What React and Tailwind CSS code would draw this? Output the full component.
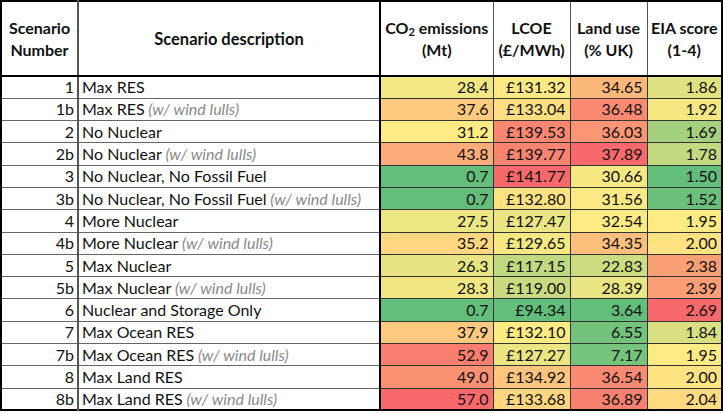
import React from 'react';

const rows = [
  ['1', 'Max RES', false, 28.4, 131.32, 34.65, 1.86],
  ['1b', 'Max RES', true, 37.6, 133.04, 36.48, 1.92],
  ['2', 'No Nuclear', false, 31.2, 139.53, 36.03, 1.69],
  ['2b', 'No Nuclear', true, 43.8, 139.77, 37.89, 1.78],
  ['3', 'No Nuclear, No Fossil Fuel', false, 0.7, 141.77, 30.66, 1.5],
  ['3b', 'No Nuclear, No Fossil Fuel', true, 0.7, 132.8, 31.56, 1.52],
  ['4', 'More Nuclear', false, 27.5, 127.47, 32.54, 1.95],
  ['4b', 'More Nuclear', true, 35.2, 129.65, 34.35, 2.0],
  ['5', 'Max Nuclear', false, 26.3, 117.15, 22.83, 2.38],
  ['5b', 'Max Nuclear', true, 28.3, 119.0, 28.39, 2.39],
  ['6', 'Nuclear and Storage Only', false, 0.7, 94.34, 3.64, 2.69],
  ['7', 'Max Ocean RES', false, 37.9, 132.1, 6.55, 1.84],
  ['7b', 'Max Ocean RES', true, 52.9, 127.27, 7.17, 1.95],
  ['8', 'Max Land RES', false, 49.0, 134.92, 36.54, 2.0],
  ['8b', 'Max Land RES', true, 57.0, 133.68, 36.89, 2.04],
];

const GREEN = [99, 190, 123];
const YELLOW = [255, 235, 132];
const RED = [248, 105, 107];

// excel style 3-colour scale, midpoint = 50th percentile
function colourScale(values) {
  const s = [...values].sort((a, b) => a - b);
  const min = s[0], max = s[s.length - 1], mid = s[Math.floor(s.length / 2)];
  return v => {
    let a, b, t;
    if (v <= mid) { a = GREEN; b = YELLOW; t = mid === min ? 1 : (v - min) / (mid - min); }
    else { a = YELLOW; b = RED; t = (v - mid) / (max - mid); }
    const c = a.map((x, i) => Math.round(x + (b[i] - x) * t));
    return `rgb(${c[0]},${c[1]},${c[2]})`;
  };
}

const scales = [3, 4, 5, 6].map(i => colourScale(rows.map(r => r[i])));

const fmt = [v => v.toFixed(1), v => '£' + v.toFixed(2), v => v.toFixed(2), v => v.toFixed(2)];

export default function App() {
  return (
    <div className="w-[723px] h-[414px] bg-white overflow-hidden" style={{ fontFamily: 'Lato, "Open Sans", sans-serif' }}>
      <table className="w-[723px] border-collapse table-fixed border-2 border-black text-[16px] text-[#111]">
        <colgroup>
          <col className="w-[77px]" />
          <col className="w-[302px]" />
          <col className="w-[113px]" />
          <col className="w-[77px]" />
          <col className="w-[77px]" />
          <col />
        </colgroup>
        <thead>
          <tr className="h-[75px] font-bold leading-[22px]">
            <th className="border-b-2 border-r-2 border-b-black border-r-[#555] font-bold">Scenario<br />Number</th>
            <th className="border-b-2 border-r-2 border-black font-bold text-[16.5px]">Scenario description</th>
            <th className="border-b-2 border-r border-b-black border-r-[#555] font-bold">CO<sub className="text-[11px]">2</sub> emissions<br />(Mt)</th>
            <th className="border-b-2 border-r border-b-black border-r-[#555] font-bold">LCOE<br />(£/MWh)</th>
            <th className="border-b-2 border-r border-b-black border-r-[#555] font-bold">Land use<br />(% UK)</th>
            <th className="border-b-2 border-black font-bold">EIA score<br />(1-4)</th>
          </tr>
        </thead>
        <tbody>
          {rows.map(r => (
            <tr key={r[0]} className="h-[22.3px] leading-[20px]">
              <td className="border-t border-t-[#666] border-r-2 border-r-[#555] text-right pr-[3px] p-0">{r[0]}</td>
              <td className="border-t border-t-[#666] border-r-2 border-r-black pl-[3px] p-0 whitespace-nowrap">
                {r[1]}
                {r[2] && <span className="italic text-[#8a8a8a]"> (w/ wind lulls)</span>}
              </td>
              {[3, 4, 5, 6].map((c, i) => (
                <td key={c}
                  className={`border-t border-t-[#333] text-right pr-[4px] p-0 ${i < 3 ? 'border-r border-r-[#333]' : ''}`}
                  style={{ backgroundColor: scales[i](r[c]) }}>
                  {fmt[i](r[c])}
                </td>
              ))}
            </tr>
          ))}
        </tbody>
      </table>
    </div>
  );
}
